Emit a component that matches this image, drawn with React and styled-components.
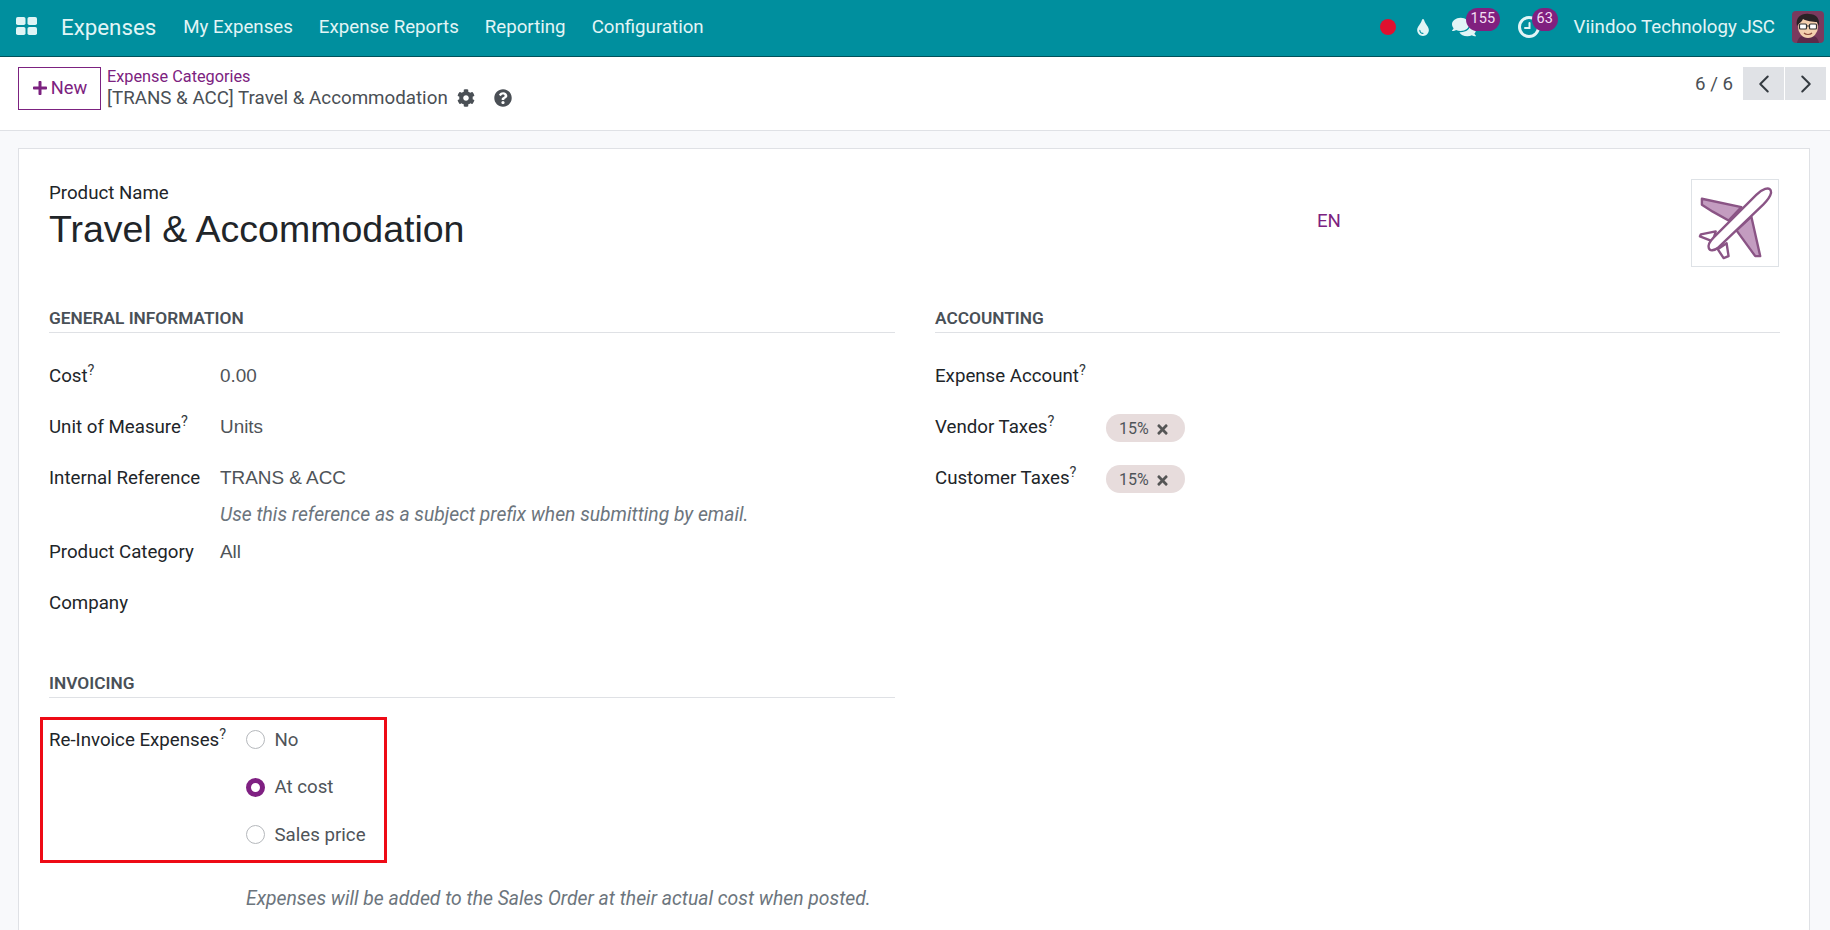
import React from 'react'
import styled, { createGlobalStyle } from 'styled-components'
import { FaPlus, FaCog, FaQuestionCircle, FaTint, FaComments, FaTimes } from 'react-icons/fa'
import { ChevronLeft, ChevronRight } from 'lucide-react'

const Global = createGlobalStyle`
  html, body { margin: 0; height: 100%; overflow: hidden; background: #f8f9fb; }
  body { font-family: Roboto, "Liberation Sans", sans-serif; font-size: 16.3px; color: #212529; }
  * { box-sizing: border-box; }
`

const Page = styled.div`
  width: 1830px;
  height: 930px;
  overflow: hidden;
  display: flex;
  flex-direction: column;
`
const Navbar = styled.header`
  height: 57px;
  flex: none;
  background: #008f9e;
  border-bottom: 1px solid #00525b;
  color: #e2f5f6;
  display: flex;
  align-items: center;
  padding: 0 6px 2px 16px;
`
const GridSvg = styled.svg`
  width: 21px;
  height: 18px;
  margin: 0 1px 3px 0;
`
const AppName = styled.span`
  font-size: 22.3px;
  margin: 0 27px 0 23px;
`
const Menu = styled.nav`
  display: flex;
  gap: 26px;
  font-size: 18.7px;
`
const Systray = styled.div`
  margin-left: auto;
  display: flex;
  align-items: center;
`
const RecDot = styled.span`
  width: 16px;
  height: 16px;
  border-radius: 50%;
  background: #e0102f;
`
const TrayIcon = styled.span`
  position: relative;
  display: flex;
  align-items: center;
  justify-content: center;
  width: ${(p) => p.$w}px;
  margin-left: ${(p) => p.$ml}px;
`
const Badge = styled.span`
  position: absolute;
  top: -7px;
  left: ${(p) => p.$left}px;
  height: 23px;
  padding: 0 5px;
  border-radius: 12px;
  background: #80207f;
  color: #f3dff3;
  font-size: 14.5px;
  line-height: 21px;
`
const Company = styled.span`
  font-size: 18.7px;
  margin-left: 33px;
`
const Avatar = styled.svg`
  width: 32px;
  height: 32px;
  margin-left: 17px;
  border-radius: 4px;
`
const ControlPanel = styled.div`
  height: 74px;
  flex: none;
  background: #fff;
  border-bottom: 1px solid #dfe1e5;
  display: flex;
  align-items: flex-start;
  padding: 10px 4px 0 18px;
`
const NewButton = styled.button`
  width: 83px;
  height: 43px;
  border: 1px solid #7c2280;
  background: #fff;
  color: #7c2280;
  font: inherit;
  font-size: 18.3px;
  display: flex;
  align-items: center;
  justify-content: center;
  gap: 3px;
  padding: 0 0 2px;
`
const Breadcrumb = styled.div`
  margin-left: 6px;
  line-height: 21px;
`
const CrumbLink = styled.div`
  color: #7c2280;
  height: 19px;
  line-height: 19px;
`
const CrumbCurrent = styled.div`
  display: flex;
  align-items: center;
  font-size: 18.75px;
  color: #4a4f55;
  height: 28px;
  margin-top: -2px;
  svg { flex: none; }
`
const Pager = styled.div`
  margin-left: auto;
  display: flex;
  align-items: center;
  gap: 1px;
  font-size: 18.7px;
  color: #4a4f55;
`
const PagerCount = styled.span`
  margin-right: 9px;
`
const PagerButton = styled.span`
  width: 41px;
  height: 33px;
  background: #e0e2e6;
  color: #343a40;
  display: flex;
  align-items: center;
  justify-content: center;
`
const Content = styled.main`
  flex: 1;
  padding: 17px 20px 0 18px;
`
const Sheet = styled.section`
  background: #fff;
  border: 1px solid #dfe1e5;
  padding: 30px 30px 0 30px;
  height: 900px;
`
const TitleRow = styled.div`
  display: flex;
  align-items: flex-start;
  height: 126px;
`
const TitleBlock = styled.div`
  width: 1268px;
  padding-top: 5px;
`
const TitleLabel = styled.div`
  line-height: 19px;
  font-size: 18.7px;
  padding-bottom: 2px;
`
const Title = styled.h1`
  margin: 0;
  font-family: "Liberation Sans", Arial, sans-serif;
  font-weight: 400;
  font-size: 37.5px;
  line-height: 48px;
`
const Lang = styled.span`
  color: #7c2280;
  font-size: 18.7px;
  margin-top: 31px;
`
const ProductImage = styled.div`
  margin-left: auto;
  width: 88px;
  height: 88px;
  border: 1px solid #dee2e6;
`
const Columns = styled.div`
  display: grid;
  grid-template-columns: 846px 845px;
  column-gap: 40px;
`
const Group = styled.div`
  display: flex;
  flex-direction: column;
`
const GroupTitle = styled.h2`
  margin: 0 0 30px;
  padding-top: 1px;
  font-size: 17.3px;
  font-weight: 600;
  color: #495057;
  text-transform: uppercase;
  line-height: 24px;
  height: 28px;
  border-bottom: 1px solid #dfe1e5;
  &:not(:first-child) { margin-top: 28.5px; }
`
const Field = styled.div`
  display: grid;
  grid-template-columns: ${(p) => p.$label || 171}px 1fr;
  min-height: 51px;
  align-items: start;
  font-size: 18.7px;
  line-height: 26px;
`
const Label = styled.div`
  color: #212529;
  sup { font-size: 14.5px; line-height: 0; color: #343a40; }
`
const Value = styled.div`
  color: #4f5459;
  font-family: "Liberation Sans", Arial, sans-serif;
  font-size: 18.9px;
`
const Hint = styled.div`
  font-family: Roboto, "Liberation Sans", sans-serif;
  font-style: italic;
  color: #6c757d;
  font-size: 19.3px;
  line-height: 24px;
  margin-top: 12px;
  margin-bottom: 12px;
`
const Chip = styled.span`
  display: inline-flex;
  align-items: center;
  gap: 6px;
  height: 28px;
  width: 79px;
  padding: 2px 0 0 13px;
  border-radius: 14px;
  background: #e7dcdc;
  color: #4f5459;
  font-family: Roboto, "Liberation Sans", sans-serif;
  font-size: 16px;
  svg { color: #555; }
`
const Highlight = styled.div`
  width: 347px;
  height: 146px;
  margin: -11px 0 0 -9px;
  border: 3px solid #ee0a16;
  padding: 7px 0 0 6px;
`
const RadioGroup = styled.div`
  display: flex;
  flex-direction: column;
  gap: 21.5px;
`
const RadioRow = styled.label`
  display: flex;
  align-items: center;
  gap: 9.5px;
  height: 26px;
  color: #4f5459;
`
const RadioMark = styled.span`
  width: 19px;
  height: 19px;
  border-radius: 50%;
  background: #fff;
  border: ${(p) => (p.$on ? '5px solid #7f2082' : '1px solid #b5b8bc')};
`
const FootHint = styled.div`
  font-style: italic;
  color: #6c757d;
  font-size: 19.33px;
  line-height: 24px;
  margin: 24.5px 0 0 197px;
`

const GridIcon = () => (
  <GridSvg viewBox="0 0 21 18" fill="#dff4f5">
    <rect x="0" y="0" width="9.5" height="8" rx="1.8" />
    <rect x="11.5" y="0" width="9.5" height="8" rx="1.8" />
    <rect x="0" y="10" width="9.5" height="8" rx="1.8" />
    <rect x="11.5" y="10" width="9.5" height="8" rx="1.8" />
  </GridSvg>
)

const ClockIcon = () => (
  <svg width="24" height="24" viewBox="0 0 24 24" fill="none" stroke="#e2f5f6" strokeLinecap="round">
    <circle cx="12" cy="12" r="9.5" strokeWidth="3" />
    <path d="M12.5 8v5H8" strokeWidth="2" />
  </svg>
)

const PlaneImage = () => (
  <svg width="86" height="86" viewBox="0 0 87 87">
    <g stroke="#8a5485" strokeWidth="2.4" strokeLinejoin="round">
      <path d="M10 19 50 27.5 37 41 21 32 10 25Z" fill="#c39cc0" />
      <path d="M60 37 69 77H64L45 51Z" fill="#c39cc0" />
      <path d="M9 55 24 52 21 62 8 57Z" fill="#fff" />
      <path d="M35 64 37 77 32 79 26 70Z" fill="#fff" />
      <path d="M74 9C78 8 80 9 80 13 79 18 76 21 72 25L27 68C22 72 18 72 17 69 16 66 18 62 22 58L65 15C68 12 71 10 74 9Z" fill="#fff" />
    </g>
  </svg>
)

const AvatarFace = () => (
  <Avatar viewBox="0 0 32 32">
    <rect width="32" height="32" fill="#7a3a5e" />
    <path d="M5 32c1-6 5-8 11-8s10 2 11 8Z" fill="#5c2b4a" />
    <ellipse cx="16" cy="16" rx="10" ry="11" fill="#f3cfae" />
    <path d="M5 15C3 6 10 2 17 3c7 0 11 4 10 12l-2-4c-4 0-11-1-14-3-1 3-4 4-6 7Z" fill="#2a2226" />
    <g fill="#fff" stroke="#333" strokeWidth="1.2">
      <rect x="7.5" y="13" width="7" height="5" rx="1" />
      <rect x="17.5" y="13" width="7" height="5" rx="1" />
    </g>
    <path d="M14.5 15h3" stroke="#333" strokeWidth="1.2" />
    <path d="M12 22c2 2 6 2 8 0" stroke="#8c4a3a" strokeWidth="1.2" fill="none" />
  </Avatar>
)

const Sup = () => <sup>?</sup>

export default function App() {
  return (
    <Page>
      <Global />
      <Navbar>
        <GridIcon />
        <AppName>Expenses</AppName>
        <Menu>
          <span>My Expenses</span>
          <span>Expense Reports</span>
          <span>Reporting</span>
          <span>Configuration</span>
        </Menu>
        <Systray>
          <RecDot />
          <TrayIcon $w={16} $ml={19}><FaTint size={17} /></TrayIcon>
          <TrayIcon $w={24} $ml={21}>
            <FaComments size={24} />
            <Badge $left={14}>155</Badge>
          </TrayIcon>
          <TrayIcon $w={24} $ml={41}>
            <ClockIcon />
            <Badge $left={15}>63</Badge>
          </TrayIcon>
          <Company>Viindoo Technology JSC</Company>
          <AvatarFace />
        </Systray>
      </Navbar>
      <ControlPanel>
        <NewButton><FaPlus size={16} />New</NewButton>
        <Breadcrumb>
          <CrumbLink>Expense Categories</CrumbLink>
          <CrumbCurrent>
            [TRANS &amp; ACC] Travel &amp; Accommodation
            <FaCog size={18} style={{ marginLeft: 9 }} />
            <FaQuestionCircle size={18} style={{ marginLeft: 19 }} />
          </CrumbCurrent>
        </Breadcrumb>
        <Pager>
          <PagerCount>6 / 6</PagerCount>
          <PagerButton><ChevronLeft size={30} strokeWidth={1.6} /></PagerButton>
          <PagerButton><ChevronRight size={30} strokeWidth={1.6} /></PagerButton>
        </Pager>
      </ControlPanel>
      <Content>
        <Sheet>
          <TitleRow>
            <TitleBlock>
              <TitleLabel>Product Name</TitleLabel>
              <Title>Travel &amp; Accommodation</Title>
            </TitleBlock>
            <Lang>EN</Lang>
            <ProductImage><PlaneImage /></ProductImage>
          </TitleRow>
          <Columns>
            <Group>
              <GroupTitle>General Information</GroupTitle>
              <Field><Label>Cost<Sup /></Label><Value>0.00</Value></Field>
              <Field><Label>Unit of Measure<Sup /></Label><Value>Units</Value></Field>
              <Field>
                <Label>Internal Reference</Label>
                <Value>
                  TRANS &amp; ACC
                  <Hint>Use this reference as a subject prefix when submitting by email.</Hint>
                </Value>
              </Field>
              <Field><Label>Product Category</Label><Value>All</Value></Field>
              <Field><Label>Company</Label><Value /></Field>
              <GroupTitle>Invoicing</GroupTitle>
              <Highlight>
                <Field $label={197}>
                  <Label>Re-Invoice Expenses<Sup /></Label>
                  <RadioGroup>
                    <RadioRow><RadioMark />No</RadioRow>
                    <RadioRow><RadioMark $on />At cost</RadioRow>
                    <RadioRow><RadioMark />Sales price</RadioRow>
                  </RadioGroup>
                </Field>
              </Highlight>
              <FootHint>Expenses will be added to the Sales Order at their actual cost when posted.</FootHint>
            </Group>
            <Group>
              <GroupTitle>Accounting</GroupTitle>
              <Field><Label>Expense Account<Sup /></Label><Value /></Field>
              <Field><Label>Vendor Taxes<Sup /></Label><Value><Chip>15%<FaTimes size={15} /></Chip></Value></Field>
              <Field><Label>Customer Taxes<Sup /></Label><Value><Chip>15%<FaTimes size={15} /></Chip></Value></Field>
            </Group>
          </Columns>
        </Sheet>
      </Content>
    </Page>
  )
}
